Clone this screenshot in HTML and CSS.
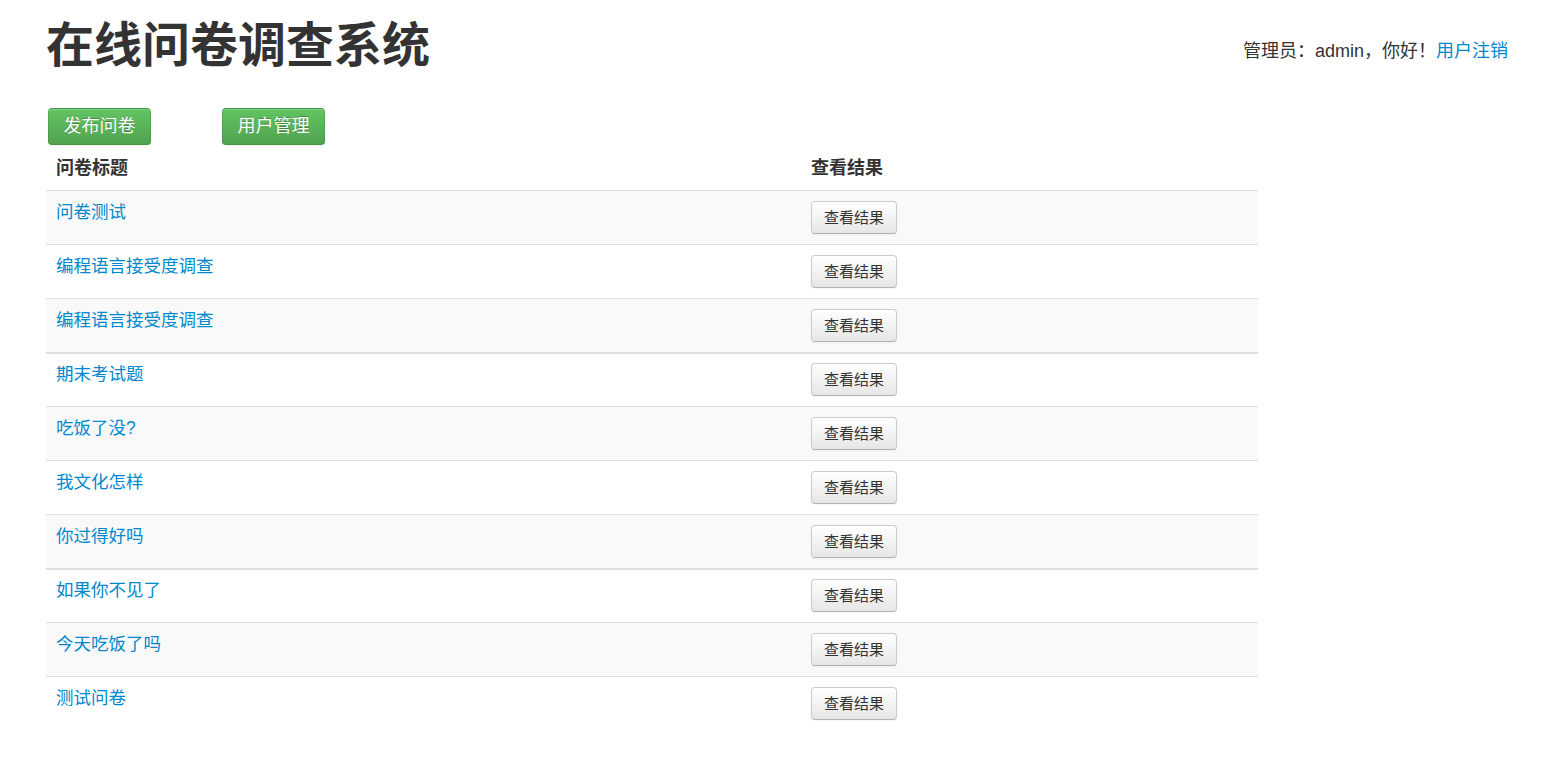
FILE: index.html
```
<!DOCTYPE html>
<html>
<head>
    <meta charset="utf-8">
    <title>在线问卷调查系统</title>
    <link rel="stylesheet" href="styles.css">
</head>
<body>
<div class="page">
    <div class="header">
        <h1>在线问卷调查系统</h1>
        <div class="userinfo">管理员：admin，你好！<a href="#">用户注销</a></div>
    </div>
    <div class="toolbar">
        <a class="btn btn-success" href="#">发布问卷</a>
        <a class="btn btn-success" href="#">用户管理</a>
    </div>
    <table class="qtable">
        <thead>
            <tr><th class="col-title">问卷标题</th><th>查看结果</th></tr>
        </thead>
        <tbody>
            <tr class="odd"><td class="title"><a href="#">问卷测试</a></td><td><a class="btn" href="#">查看结果</a></td></tr>
            <tr><td class="title"><a href="#">编程语言接受度调查</a></td><td><a class="btn" href="#">查看结果</a></td></tr>
            <tr class="odd"><td class="title"><a href="#">编程语言接受度调查</a></td><td><a class="btn" href="#">查看结果</a></td></tr>
        </tbody>
        <tbody>
            <tr><td class="title"><a href="#">期末考试题</a></td><td><a class="btn" href="#">查看结果</a></td></tr>
            <tr class="odd"><td class="title"><a href="#">吃饭了没?</a></td><td><a class="btn" href="#">查看结果</a></td></tr>
            <tr><td class="title"><a href="#">我文化怎样</a></td><td><a class="btn" href="#">查看结果</a></td></tr>
            <tr class="odd"><td class="title"><a href="#">你过得好吗</a></td><td><a class="btn" href="#">查看结果</a></td></tr>
        </tbody>
        <tbody>
            <tr><td class="title"><a href="#">如果你不见了</a></td><td><a class="btn" href="#">查看结果</a></td></tr>
            <tr class="odd"><td class="title"><a href="#">今天吃饭了吗</a></td><td><a class="btn" href="#">查看结果</a></td></tr>
            <tr><td class="title"><a href="#">测试问卷</a></td><td><a class="btn" href="#">查看结果</a></td></tr>
        </tbody>
    </table>
</div>
</body>
</html>
```
FILE: styles.css
```
body {margin:0; background:#fff; color:#333; font-family:"Liberation Sans","Noto Sans CJK SC",sans-serif; font-size:18px; line-height:20px;}
a {color:#0088cc; text-decoration:none;}
.page {padding:17px 56px 0 46px;}
.header {display:flex; justify-content:space-between; align-items:flex-start;}
.header h1 {margin:0; font-size:48px; line-height:58px; font-weight:bold; color:#333;}
.userinfo {margin-top:22px; line-height:24px; font-size:18px;}
.toolbar {display:flex; gap:71px; margin-top:33px; padding-left:2px;}
.btn {display:inline-block; padding:5px 12px; font-size:15px; line-height:21px; color:#333; text-align:center; background:linear-gradient(#ffffff,#e6e6e6); border:1px solid #ccc; border-bottom-color:#b3b3b3; border-radius:4px; box-shadow:inset 0 1px 0 rgba(255,255,255,.2), 0 1px 2px rgba(0,0,0,.05);}
.btn-success {padding:5px 14.5px; font-size:18px; line-height:25px; color:#fff; text-shadow:0 -1px 0 rgba(0,0,0,.25); background:linear-gradient(#62c462,#51a351); border-color:rgba(0,0,0,.1) rgba(0,0,0,.1) rgba(0,0,0,.25);}
.qtable {width:1212px; margin-top:3px; border-collapse:collapse;}
.qtable th {text-align:left; font-weight:bold; padding:10px 10px 12px; line-height:20px;}
.qtable .col-title {width:735px;}
.qtable td {padding:10px; border-top:1px solid #ddd; vertical-align:top;}
.qtable td.title {padding-top:11px; font-size:17.5px;}
.qtable tbody + tbody tr:first-child td {border-top:2px solid #ddd; padding-top:9px;}
.qtable tbody + tbody tr:first-child td.title {padding-top:10px;}
.qtable tr.odd td {background:#f9f9f9;}
```
